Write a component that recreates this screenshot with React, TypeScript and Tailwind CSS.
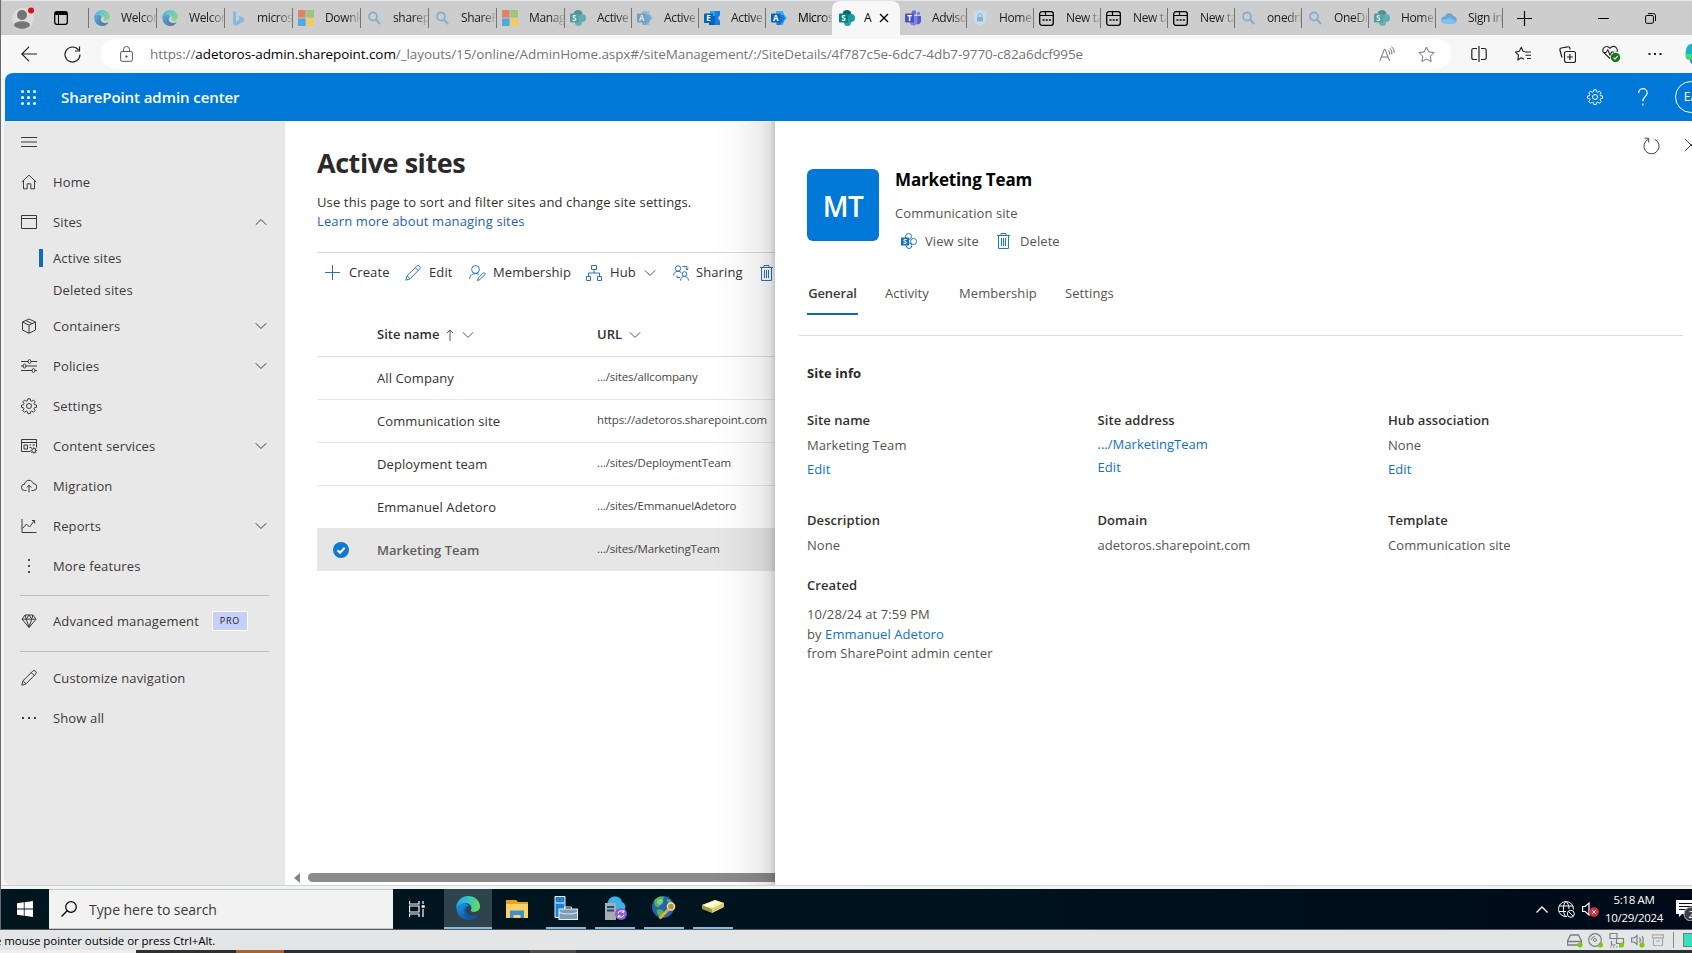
import React, { type ReactNode } from "react";

type IconProps = { children: ReactNode; className?: string; box?: string };

function Icon({ children, className = "h-4 w-4", box = "0 0 16 16" }: IconProps) {
  return (
    <svg viewBox={box} fill="none" stroke="currentColor" strokeWidth="1" className={`shrink-0 ${className}`}>
      {children}
    </svg>
  );
}

/* ---------- shared glyphs ---------- */

const ChevronDown = ({ className = "h-3 w-3" }: { className?: string }) => (
  <Icon className={className} box="0 0 12 12">
    <path d="M.8 3.3 6 8.5l5.2-5.2" />
  </Icon>
);
const ChevronUp = ({ className = "h-3 w-3" }: { className?: string }) => (
  <Icon className={className} box="0 0 12 12">
    <path d="M.8 8.7 6 3.5l5.2 5.2" />
  </Icon>
);
const Pencil = () => (
  <Icon>
    <path d="M.8 15.2 2 10.8 11.6 1.3a1.9 1.9 0 0 1 2.9 0 1.9 1.9 0 0 1 0 2.9L5 13.9.8 15.2Z M10.3 2.6l2.9 2.9 M2.1 10.8 5 13.7" />
  </Icon>
);
const Trash = ({ className = "h-4 w-[13px]" }: { className?: string }) => (
  <Icon className={className} box="0 0 13 16">
    <path d="M0 2.5h13M4 2.5v-2h5v2M1.5 2.5v13h10v-13M4.5 5v8M6.5 5v8M8.5 5v8" />
  </Icon>
);
const gearPath =
  "M6.8.8h2.4l.4 2 1.2.5 1.7-1.2 1.7 1.7L13 5.500l.5 1.200 2 .300v2.300l-2 .400-.5 1.200 1.200 1.700-1.700 1.700-1.700-1.200-1.200.500-.4 2H6.800l-.4-2-1.200-.5-1.700 1.200-1.700-1.700L3 10.900l-.5-1.200-2-.4V7l2-.3.500-1.200L1.800 3.800l1.700-1.700 1.700 1.200 1.200-.5Z";
const Gear = ({ className = "h-4 w-4" }: { className?: string }) => (
  <Icon className={className}>
    <path d={gearPath} />
    <circle cx="8" cy="8" r="2.5" />
  </Icon>
);

/* ---------- tab favicons ---------- */

function EdgeLogo({ className = "h-4 w-4", id }: { className?: string; id: string }) {
  return (
    <svg viewBox="0 0 24 24" className={`shrink-0 ${className}`}>
      <defs>
        <linearGradient id={`${id}a`} x1="0" y1=".3" x2="1" y2=".4">
          <stop offset="0" stopColor="#2aa7e8" />
          <stop offset=".55" stopColor="#34c6c3" />
          <stop offset="1" stopColor="#66e04f" />
        </linearGradient>
        <linearGradient id={`${id}b`} x1="0" y1="0" x2=".5" y2="1">
          <stop offset="0" stopColor="#1b9ce6" />
          <stop offset="1" stopColor="#0c59a4" />
        </linearGradient>
      </defs>
      <path fill={`url(#${id}b)`} d="M.2 10C.8 16 2 20.500 8 23.300c5 1.700 11.500.5 14-4.800-4 2-10 2-12-2.300-1.200-3 .5-6 3-6.700C9 5.500 2 6 .2 10Z" />
      <path fill={`url(#${id}a)`} d="M.2 11C1 4.500 6 0 12 0c7 0 12 5 12 10.200 0 3.600-3 5.700-6 5.700-2.500 0-4-.8-3-2.200 1.500-2.500-.5-6.700-5.500-6.700C5 7 1 8.700.2 11Z" />
      <path fill="#0b4f9a" d="M9.500 10.500C7 13 7 18 10.500 21.500c4 2.500 8.700.5 11.500-3-4 2-9.600 1.300-11.500-2.500-.8-2-.6-3.800.5-5.500Z" opacity=".55" />
    </svg>
  );
}

function MicrosoftLogo() {
  return (
    <svg viewBox="0 0 16 16" className="h-4 w-4 shrink-0">
      <path fill="#e0826a" d="M0 0h7.600v7.600H0z" />
      <path fill="#9ec57a" d="M8.400 0H16v7.600H8.400z" />
      <path fill="#4fa9e0" d="M0 8.400h7.600V16H0z" />
      <path fill="#f4ca60" d="M8.400 8.400H16V16H8.400z" />
    </svg>
  );
}

function BingLogo() {
  return (
    <svg viewBox="0 0 16 16" className="h-4 w-4 shrink-0">
      <path fill="#86b9e8" d="m3 1 3 1v9.500L9.500 9 8 5.500l6 2.500v3.200L6 16l-3-2z" />
    </svg>
  );
}

function SearchFavicon() {
  return (
    <Icon className="h-4 w-4 text-[#86aed1]">
      <circle cx="7" cy="6.500" r="4" strokeWidth="1.800" />
      <path d="m10 9.500 4 4.500" strokeWidth="2.200" />
    </Icon>
  );
}

function SharePointLogo({ faded }: { faded?: boolean }) {
  return (
    <svg viewBox="0 0 16 16" className={faded ? "h-4 w-4 shrink-0 opacity-60" : "h-4 w-4 shrink-0"}>
      <circle cx="8" cy="4.500" r="4.500" fill="#05696b" />
      <circle cx="12" cy="8" r="4" fill="#1a9ba1" />
      <circle cx="8.500" cy="12.500" r="3.500" fill="#2a9fa6" />
      <rect y="3.500" width="9" height="9" rx=".8" fill="#038387" />
      <text x="4.500" y="11" textAnchor="middle" fontSize="8" fontWeight="700" fill="#fff" className="font-['Open_Sans']">S</text>
    </svg>
  );
}

function AdminLogo({ faded }: { faded?: boolean }) {
  return (
    <svg viewBox="0 0 16 16" className={faded ? "h-4 w-4 shrink-0 opacity-45" : "h-4 w-4 shrink-0"}>
      <path fill="#35b2ef" d="M5 1h7l1 3.500 3 3.500-3 3.500L12 15H5z" />
      <path fill="#1a78d2" d="M7 5h5.500L14 8l-2 4-3 3H6z" />
      <rect y="3.500" width="9.500" height="9" rx=".8" fill="#0b66b8" />
      <text x="4.700" y="11" textAnchor="middle" fontSize="8" fontWeight="700" fill="#fff" className="font-['Open_Sans']">A</text>
    </svg>
  );
}

function ExchangeLogo() {
  return (
    <svg viewBox="0 0 16 16" className="h-4 w-4 shrink-0">
      <path fill="#28a8ea" d="M6 1h5v14H6z" />
      <path fill="#1480dc" d="M11 1h5v4l-2 3 2 3v4h-5z" />
      <path fill="#0364b8" d="M5 6h6v9H5z" />
      <rect y="3.500" width="9" height="9.500" rx=".8" fill="#0a62ba" />
      <text x="4.500" y="11.200" textAnchor="middle" fontSize="8" fontWeight="700" fill="#fff" className="font-['Open_Sans']">E</text>
    </svg>
  );
}

function TeamsLogo() {
  return (
    <svg viewBox="0 0 16 16" className="h-4 w-4 shrink-0">
      <circle cx="13.500" cy="3.500" r="1.700" fill="#7b83eb" />
      <circle cx="9" cy="2.600" r="2.300" fill="#6870dc" />
      <path fill="#5059c9" d="M9 6h7v5a3.500 3.500 0 0 1-5 3z" />
      <path fill="#7b83eb" d="M5 6h7.500v5.500a4 4 0 0 1-7.500 2z" />
      <rect y="3.500" width="9" height="9" rx=".8" fill="#4b53bc" />
      <text x="4.500" y="11" textAnchor="middle" fontSize="8" fontWeight="700" fill="#fff" className="font-['Open_Sans']">T</text>
    </svg>
  );
}

function ShieldLogo() {
  return (
    <svg viewBox="0 0 16 16" className="h-4 w-4 shrink-0">
      <path fill="#c4dcec" d="M8 0 14.500 2v6c0 4-3 6.500-6.500 8C4.500 14.500 1.500 12 1.500 8V2z" />
      <rect x="5" y="7" width="6" height="4.500" rx=".6" fill="#8ab5d2" />
      <path d="M6.200 7V5.500a1.800 1.800 0 0 1 3.600 0V7" fill="none" stroke="#8ab5d2" />
    </svg>
  );
}

function NewTabIcon() {
  return (
    <Icon className="h-[15px] w-[15px] text-black" box="0 0 15 15">
      <rect x=".7" y=".7" width="13.600" height="13.600" rx="2.200" strokeWidth="1.300" />
      <path d="M1 4.500h5.500V1M6.500 4.500H14" strokeWidth="1.200" />
      <path d="M3.500 9h2M6.700 9h2M9.900 9h2" strokeWidth="1.700" />
    </Icon>
  );
}

function CloudLogo() {
  return (
    <svg viewBox="0 0 16 16" className="h-4 w-4 shrink-0">
      <path fill="#6aa5d6" d="M4 6.500A4.500 4.500 0 0 1 12.500 6 3.800 3.800 0 0 1 12.500 13.500H3.500A3.500 3.500 0 0 1 4 6.500Z" />
      <path fill="#7fc0ee" d="m0 10 9-2 6.500 3.500c-.6 1.300-1.600 2-3 2h-9C1.500 13.500 0 12 0 10Z" />
    </svg>
  );
}

type Tab = { icon: ReactNode; label: string };

const leftTabs: Tab[] = [
  { icon: <span className="opacity-65"><EdgeLogo id="t1" /></span>, label: "Welcome" },
  { icon: <span className="opacity-65"><EdgeLogo id="t2" /></span>, label: "Welcome" },
  { icon: <BingLogo />, label: "microsoft" },
  { icon: <MicrosoftLogo />, label: "Download" },
  { icon: <SearchFavicon />, label: "sharepoint" },
  { icon: <SearchFavicon />, label: "SharePoint" },
  { icon: <MicrosoftLogo />, label: "Manage" },
];
const midTabs: Tab[] = [
  { icon: <SharePointLogo faded />, label: "Active" },
  { icon: <AdminLogo faded />, label: "Active" },
  { icon: <ExchangeLogo />, label: "Active" },
  { icon: <AdminLogo />, label: "Microsoft" },
];
const rightTabs: Tab[] = [
  { icon: <TeamsLogo />, label: "Advisor" },
  { icon: <ShieldLogo />, label: "Home" },
  { icon: <NewTabIcon />, label: "New tab" },
  { icon: <NewTabIcon />, label: "New tab" },
  { icon: <NewTabIcon />, label: "New tab" },
  { icon: <SearchFavicon />, label: "onedrive" },
  { icon: <SearchFavicon />, label: "OneDrive" },
  { icon: <SharePointLogo faded />, label: "Home" },
  { icon: <CloudLogo />, label: "Sign in" },
];

function TabItem({ tab, width }: { tab: Tab; width: string }) {
  return (
    <div className={`flex h-full shrink-0 items-center ${width}`}>
      <div className="ml-[5px] flex w-[27px] shrink-0 items-center">{tab.icon}</div>
      <div className="min-w-0 flex-1 overflow-hidden whitespace-nowrap text-[12px] tracking-[-0.35px] text-[#1c1c1c] [mask-image:linear-gradient(to_right,black_60%,transparent_105%)]">
        {tab.label}
      </div>
      <div className="h-5 w-px bg-[#747474]" />
    </div>
  );
}

function TabStrip() {
  return (
    <div className="flex h-[34px] items-center bg-[#cdcdcd]">
      <div className="ml-[10px] h-[22px] w-6 shrink-0 overflow-hidden">
        <svg viewBox="0 0 24 22" className="h-[22px] w-6">
          <circle cx="12" cy="12" r="11" fill="#dcdcdc" />
          <circle cx="11" cy="8" r="5" fill="#757575" />
          <path d="M3 18c1-5 15-5 16 0-2 5-14 5-16 0Z" fill="#757575" />
          <circle cx="20" cy="3.500" r="3" fill="#d4121c" />
        </svg>
      </div>
      <Icon className="ml-[19px] h-[14px] w-[14px] text-black" box="0 0 14 14">
        <rect x=".7" y=".7" width="12.600" height="12.600" rx="2" strokeWidth="1.300" />
        <path d="M1 2.500h12" strokeWidth="3" />
        <path d="M4.500 3v10" />
      </Icon>
      <div className="ml-5 h-5 w-px shrink-0 bg-[#747474]" />
      {leftTabs.map((t, i) => (
        <TabItem key={i} tab={t} width="w-[68px]" />
      ))}
      {midTabs.slice(0, 3).map((t, i) => (
        <TabItem key={i} tab={t} width="w-[67px]" />
      ))}
      <div className="flex h-full w-[66px] shrink-0 items-center">
        <div className="ml-[5px] flex w-[27px] shrink-0">{midTabs[3].icon}</div>
        <div className="min-w-0 flex-1 overflow-hidden whitespace-nowrap text-[12px] tracking-[-0.35px] [mask-image:linear-gradient(to_right,black_70%,transparent_105%)]">
          Microsoft
        </div>
      </div>
      <div className="flex h-full w-[68px] shrink-0 items-center rounded-t-lg bg-[#f7f7f7]">
        <div className="ml-[7px] flex w-[25px] shrink-0">
          <SharePointLogo />
        </div>
        <div className="w-[9px] overflow-hidden text-[12px]">A</div>
        <Icon className="ml-[6px] h-[10px] w-[10px] text-black" box="0 0 10 10">
          <path d="m1 1 8 8M9 1 1 9" strokeWidth="1.300" />
        </Icon>
      </div>
      {rightTabs.map((t, i) => (
        <TabItem key={i} tab={t} width="w-[67px]" />
      ))}
      <Icon className="ml-[14px] h-[15px] w-[15px] text-black" box="0 0 15 15">
        <path d="M7.500 0v15M0 7.500h15" strokeWidth="1.200" />
      </Icon>
      <div className="ml-[66px] h-px w-[11px] shrink-0 bg-black" />
      <Icon className="ml-[36px] h-[11px] w-[11px] text-black" box="0 0 11 11">
        <rect x=".6" y="2.500" width="7.800" height="7.800" rx="1.200" />
        <path d="M3 .6h5.500a2 2 0 0 1 2 2V8" />
      </Icon>
      <Icon className="ml-[36px] h-[11px] w-[11px] text-black" box="0 0 11 11">
        <path d="m.5.5 10 10M10.500.5.5 10.500" />
      </Icon>
    </div>
  );
}

function AddressBar() {
  return (
    <div className="flex h-[38px] items-center bg-[#f7f7f7] text-[#202020]">
      <Icon className="ml-5 h-4 w-4">
        <path d="M8 .8.800 8 8 15.200M.8 8H16" strokeWidth="1.200" />
      </Icon>
      <Icon className="ml-[27px] h-[17px] w-[17px]" box="0 0 17 17">
        <path d="M14.500 4A7.500 7.500 0 1 0 16 8.500M15.500.5V5H11" strokeWidth="1.200" />
      </Icon>
      <div className="ml-5 flex h-[30px] w-[1350px] shrink-0 items-center rounded-full bg-white">
        <Icon className="ml-[19px] h-4 w-[13px] text-[#5a5a5a]" box="0 0 13 16">
          <rect x=".6" y="5.500" width="11.800" height="9.800" rx="1.500" />
          <path d="M3.500 5.500V3.500a3 3 0 0 1 6 0v2" />
          <circle cx="6.500" cy="10.500" r=".8" fill="currentColor" />
        </Icon>
        <div className="ml-[17px] w-[1229px] shrink-0 whitespace-nowrap text-[13.5px] tracking-[-0.088px] text-[#757575]">
          https://<span className="text-black">adetoros-admin.sharepoint.com</span>
          /_layouts/15/online/AdminHome.aspx#/siteManagement/:/SiteDetails/4f787c5e-6dc7-4db7-9770-c82a6dcf995e
        </div>
        <Icon className="h-4 w-4 text-[#757575]">
          <path d="M.8 15 5.500 3h.4l4.700 12M2.500 11h6.500M9.500 4.500a4 4 0 0 1 1 4M11 2.300a6.500 6.500 0 0 1 1.800 6M12.500.500A8.500 8.500 0 0 1 15.300 7" />
        </Icon>
        <Icon className="ml-[23px] h-[17px] w-[17px] text-[#757575]" box="0 0 17 17">
          <path strokeLinejoin="round" d="m8.500 1 2.300 4.900 5.300.7-3.900 3.700 1 5.300-4.700-2.600-4.700 2.600 1-5.300L.9 6.600l5.300-.7z" />
        </Icon>
      </div>
      <Icon className="ml-5 h-4 w-4">
        <path strokeWidth="1.200" d="M8 0v16M6 2.500H2.500A1.700 1.700 0 0 0 .8 4.200v7.600a1.700 1.700 0 0 0 1.700 1.700H6M10 2.500h3.500a1.700 1.700 0 0 1 1.700 1.700v7.600a1.700 1.700 0 0 1-1.700 1.700H10" />
      </Icon>
      <Icon className="ml-[28px] h-4 w-4">
        <path strokeLinejoin="round" strokeWidth="1.100" d="M10 5.500 8 5.200 6.300 1.200 4.300 5.300.5 6l3 3.100-.7 4.900 3.500-2.200 2.700 1.400M10 6h6M10.500 9.200H16M12 12.500h4" />
      </Icon>
      <Icon className="ml-[28px] h-[17px] w-[17px]" box="0 0 17 17">
        <path strokeWidth="1.200" d="M3 11.500 1 4.500A2 2 0 0 1 2.200 2L8.500.8a2 2 0 0 1 2.400 1.500l.3 1.200M10.900 8v6M7.900 11h6" />
        <rect x="5.500" y="5.500" width="11" height="11" rx="2" strokeWidth="1.200" />
      </Icon>
      <Icon className="ml-[26px] h-[18px] w-[19px]" box="0 0 19 18">
        <path d="M8 13.500 1.600 7.500C-.8 4.500 3 .2 6.600 2L8 3.300 9.300 2c3.500-2 7 1.500 5.600 4.800M1 7.500h3l1.800-2.700L8 10l1.700-3h2.500" strokeWidth="1.100" />
        <circle cx="13.500" cy="12.500" r="4.700" fill="#13771b" stroke="none" />
        <path d="m11.500 12.600 1.500 1.500 2.600-3" stroke="#fff" strokeWidth="1.200" />
      </Icon>
      <Icon className="ml-[27px] h-[4px] w-[14px]" box="0 0 14 4">
        <path d="M.5 2h2M6 2h2M11.500 2h2" strokeWidth="2.200" />
      </Icon>
      <svg viewBox="0 0 22 22" className="ml-[22px] h-[22px] w-[22px] shrink-0">
        <path d="M7 1h7l-4 15H4C0 16 1 1 7 1Z" fill="#12b5c9" />
        <path d="M2 11h9l-2 6H5c-3 0-4-3-3-6Z" fill="#48d67d" />
        <path d="M6 17h6l-1 4H9c-2 0-3-2-3-4Z" fill="#2b7be0" />
      </svg>
    </div>
  );
}

function AppHeader() {
  return (
    <div className="ml-1 flex h-12 items-center rounded-tl-lg bg-[#0078d7] text-white">
      <div className="ml-4 grid grid-cols-3 gap-[3px]">
        {Array.from({ length: 9 }, (_, i) => (
          <span key={i} className="h-[3px] w-[3px] rounded-full bg-white" />
        ))}
      </div>
      <div className="ml-[25px] flex-1 text-[15px] font-semibold tracking-[-0.07px]">SharePoint admin center</div>
      <Gear className="h-4 w-4" />
      <Icon className="ml-[35px] h-[18px] w-[10px]" box="0 0 10 18">
        <path d="M.7 5a4.200 4.200 0 0 1 8.500-.2c0 4-4.400 4-4.400 8.500M4.800 15.500v2" strokeWidth="1.200" />
      </Icon>
      <div className="-mr-[15px] ml-[27px] flex h-[32px] w-[32px] shrink-0 items-center justify-center rounded-full border border-white text-[12px]">
        EA
      </div>
    </div>
  );
}

/* ---------- navigation ---------- */

const nav: Record<string, ReactNode> = {
  home: <path d="M.8 8 8 1.200 15.200 8M2.500 6.500v8.300h3.700v-5h3.600v5h3.700V6.500" />,
  sites: <path d="M.5 1.500h15v13H.5zM.5 4.500h15" />,
  containers: <path d="M8 1 14.500 4v8L8 15.300 1.500 12V4zM1.500 4 8 7.200 14.500 4M8 7.200v8M4.700 2.500 11.200 5.700" />,
  policies: (
    <>
      <path d="M0 3.500h7M10 3.500h6M0 8h2M5 8h11M0 12.500h11M14 12.500h2" strokeWidth="1.200" />
      <ellipse cx="8.500" cy="3.500" rx="1.400" ry="2" />
      <ellipse cx="3.500" cy="8" rx="1.400" ry="2" />
      <ellipse cx="12.500" cy="12.500" rx="1.400" ry="2" />
    </>
  ),
  content: (
    <>
      <path d="M9.500 13.500H.5v-12h15v8M.5 4.500h15M3 7h3.500v4H3zM8.500 7H10M11.500 7H14M8.500 9.500h2" />
      <circle cx="12.800" cy="12.500" r="2" />
      <path d="M12.800 9.300v1M12.800 14.700v1M9.600 12.500h1M15 12.500h1M10.500 10.200l.8.800M14.300 14l.8.800M15.100 10.200l-.8.800M11.300 14l-.8.800" />
    </>
  ),
  migration: <path d="M5.500 12.500H3.500a3.100 3.100 0 0 1 0-6.200C4 3.500 6 2.300 8 2.300S11.800 3.500 12.300 5.500a3.500 3.500 0 0 1 0 7H10.500M8 14.500V7.200M5.700 9.500 8 7.200l2.300 2.300" />,
  reports: <path d="M1 1v13.500h14.500M1.500 10.500l4-4.500 3 3 5-6.500M11 2.500h2.700v3" />,
  more: <path d="M8 1v2M8 7v2M8 13v2" strokeWidth="1.800" />,
  advanced: <path d="M4 2h8l3 4.200L8 14.500 1 6.200zM1 6.200h14M5.300 6.200 8 14.300l2.700-8.100L8 2 5.300 6.200 4 2M12 2l-1.300 4.200" />,
  all: <path d="M1 8h2M7 8h2M13 8h2" strokeWidth="1.800" />,
};

function NavRow({ icon, label, chevron, badge }: { icon: ReactNode; label: string; chevron?: "up" | "down"; badge?: string }) {
  return (
    <div className="flex h-10 items-center pl-[17px] pr-[18px]">
      <div className="flex w-8 shrink-0 pb-px">{icon}</div>
      <div className="whitespace-nowrap pt-px">{label}</div>
      {badge && (
        <div className="ml-[13px] flex h-5 w-9 items-center justify-center border border-white bg-[#c7d0f8] text-[9px] tracking-[0.8px] text-[#222]">
          {badge}
        </div>
      )}
      <div className="flex-1" />
      {chevron === "up" && <ChevronUp />}
      {chevron === "down" && <ChevronDown />}
    </div>
  );
}

function Sidebar() {
  return (
    <nav className="ml-[3px] flex w-[281px] shrink-0 flex-col rounded-bl-lg bg-[#e8e8e8] text-[13px] tracking-[0.13px] text-[#3b3a39]">
      <div className="flex h-[41px] items-center pl-[17px]">
        <Icon>
          <path d="M0 3.500h16M0 8h16M0 12.500h16" strokeWidth="1.100" />
        </Icon>
      </div>
      <NavRow icon={<Icon>{nav.home}</Icon>} label="Home" />
      <NavRow icon={<Icon>{nav.sites}</Icon>} label="Sites" chevron="up" />
      <div className="flex h-8 items-center pl-[35px]">
        <span className="h-[18px] w-1 bg-[#0f6cbd]" />
        <span className="ml-[10px] pt-px">Active sites</span>
      </div>
      <div className="flex h-8 items-center pl-[49px] pt-px">Deleted sites</div>
      <NavRow icon={<Icon>{nav.containers}</Icon>} label="Containers" chevron="down" />
      <NavRow icon={<Icon>{nav.policies}</Icon>} label="Policies" chevron="down" />
      <NavRow icon={<Gear />} label="Settings" />
      <NavRow icon={<Icon>{nav.content}</Icon>} label="Content services" chevron="down" />
      <NavRow icon={<Icon>{nav.migration}</Icon>} label="Migration" />
      <NavRow icon={<Icon>{nav.reports}</Icon>} label="Reports" chevron="down" />
      <NavRow icon={<Icon>{nav.more}</Icon>} label="More features" />
      <div className="mx-4 mb-[5px] mt-[9px] h-px bg-[#bdbdbd]" />
      <NavRow icon={<Icon>{nav.advanced}</Icon>} label="Advanced management" badge="PRO" />
      <div className="mx-4 mb-[6px] mt-[10px] h-px bg-[#bdbdbd]" />
      <NavRow icon={<Pencil />} label="Customize navigation" />
      <NavRow icon={<Icon>{nav.all}</Icon>} label="Show all" />
    </nav>
  );
}

/* ---------- site list ---------- */

const sites = [
  { name: "All Company", url: ".../sites/allcompany" },
  { name: "Communication site", url: "https://adetoros.sharepoint.com" },
  { name: "Deployment team", url: ".../sites/DeploymentTeam" },
  { name: "Emmanuel Adetoro", url: ".../sites/EmmanuelAdetoro" },
  { name: "Marketing Team", url: ".../sites/MarketingTeam", selected: true },
];

function SiteList() {
  return (
    <section className="relative flex w-[490px] shrink-0 flex-col overflow-hidden bg-white pl-8 text-[13px] tracking-[0.1px] text-[#323130]">
      <h1 className="mt-[22px] h-10 text-[27px] font-bold leading-[40px] tracking-[-0.45px] text-[#2b2a29]">Active sites</h1>
      <div className="mt-[10px] whitespace-nowrap leading-[19px] tracking-[0.13px]">
        Use this page to sort and filter sites and change site settings.
        <div className="text-[#1f62b0]">Learn more about managing sites</div>
      </div>
      <div className="mt-[21px] flex h-10 shrink-0 items-center whitespace-nowrap border-t border-[#d8d8d8] [&_svg]:text-[#2b73b9] [&>span]:pt-px">
        <Icon className="ml-2 h-[15px] w-[15px]" box="0 0 15 15">
          <path d="M7.500 0v15M0 7.500h15" />
        </Icon>
        <span className="ml-[9px] w-[56px]">Create</span>
        <Pencil />
        <span className="ml-2 w-[40px]">Edit</span>
        <Icon className="h-4 w-[17px]" box="0 0 17 16">
          <circle cx="6.500" cy="4.500" r="3.900" />
          <path d="M.6 14c0-3.500 2.700-5.500 5.900-5.500 1.500 0 2.700.5 3.500 1M8.500 15.500l.7-2.500 5-5c1-.8 2.500.7 1.600 1.700l-5 5z" />
        </Icon>
        <span className="ml-[7px] w-[93px]">Membership</span>
        <Icon className="h-4 w-4">
          <path d="M5.500.5h5v4h-5zM.5 11.500h4v4h-4zM11.500 11.500h4v4h-4zM8 4.500V8M2.500 11.500V8h11v3.500" />
        </Icon>
        <span className="ml-2 w-[34px]">Hub</span>
        <span className="flex w-[29px] [&_svg]:!text-[#555]">
          <ChevronDown />
        </span>
        <Icon className="h-4 w-4">
          <circle cx="5" cy="3.500" r="2.700" />
          <circle cx="11.500" cy="9" r="2.300" />
          <path d="M.5 10.500C.5 8 2.500 6.300 5 6.300c1.300 0 2.500.5 3.300 1.300M7.500 15.500c0-2.500 1.800-4 4-4s4 1.500 4 4M9.500 1.500h4.500V5M12.500 3.500 14 5l1.500-1.500M7 12.500H4v-2" />
        </Icon>
        <span className="ml-[7px] w-[64px]">Sharing</span>
        <Trash />
      </div>
      <div className="mt-[21px] flex h-[44px] shrink-0 items-center border-b border-[#e1dfdd] font-semibold tracking-[0]">
        <div className="ml-[60px] flex w-[220px] items-center">
          Site name
          <Icon className="ml-[7px] h-3 w-2 text-[#555]" box="0 0 8 12">
            <path d="M4 12V1M1 4l3-3 3 3" />
          </Icon>
          <ChevronDown className="ml-[8px] h-3 w-3 text-[#555]" />
        </div>
        URL
        <ChevronDown className="ml-[7px] h-3 w-3 text-[#555]" />
      </div>
      {sites.map((s) => (
        <div
          key={s.name}
          className={
            s.selected
              ? "-mt-px flex h-[43px] shrink-0 items-center bg-[#e6e6e6] pt-px"
              : "flex h-[43px] shrink-0 items-center border-b border-[#e8e7e6] pt-px"
          }
        >
          <div className="flex w-[60px] shrink-0 pl-4">
            {s.selected && (
              <svg viewBox="0 0 16 16" className="h-4 w-4">
                <circle cx="8" cy="8" r="8" fill="#0f78d0" />
                <path d="m4.500 8.200 2.500 2.500 4.700-4.900" fill="none" stroke="#fff" strokeWidth="2" />
              </svg>
            )}
          </div>
          <div className={s.selected ? "w-[220px] shrink-0 pt-px font-semibold tracking-[0] text-[#605e5c]" : "w-[220px] shrink-0 pt-px"}>
            {s.name}
          </div>
          <div className="whitespace-nowrap pb-[3px] text-[11.5px] tracking-[-0.14px] text-[#484644]">{s.url}</div>
        </div>
      ))}
      <div className="flex-1" />
      <div className="-ml-8 mb-[3px] flex h-[9px] shrink-0 items-center pl-[9px]">
        <svg viewBox="0 0 6 10" className="h-[10px] w-[6px]">
          <path d="M6 0v10L0 5z" fill="#858585" />
        </svg>
        <div className="ml-[8px] h-[9px] flex-1 rounded-l-full bg-[#8b8b8b]" />
      </div>
      <div className="pointer-events-none absolute inset-y-0 right-0 w-[65px] bg-[linear-gradient(to_right,transparent,rgba(0,0,0,0.02)_40%,rgba(0,0,0,0.07)_78%,rgba(0,0,0,0.12)_92%,rgba(0,0,0,0.22))]" />
    </section>
  );
}

/* ---------- details panel ---------- */

function Field({ label, children }: { label: string; children: ReactNode }) {
  return (
    <div className="w-[290.5px] shrink-0">
      <div className="h-5 font-semibold leading-5 text-[#323130]">{label}</div>
      {children}
    </div>
  );
}

const link = "text-[#1070c4]";

function DetailsPanel() {
  return (
    <aside className="flex flex-1 flex-col overflow-hidden bg-white text-[13px] tracking-[0.08px] text-[#555351]">
      <div className="mt-4 flex h-4 shrink-0 justify-end">
        <Icon className="h-[18px] w-[17px] text-[#444]" box="0 0 17 18">
          <path d="M5.500 2.200A7.600 7.600 0 1 0 11.500 2.200M1.500 1.200H5.700V5.500" />
        </Icon>
        <Icon className="-mr-[7px] ml-[24px] h-[15px] w-[15px] text-[#444]" box="0 0 15 15">
          <path d="m1 2 12 12M13 2 1 14" />
        </Icon>
      </div>
      <div className="ml-8 mt-4 flex h-[86px] shrink-0">
        <div className="flex h-[72px] w-[72px] items-center justify-center rounded-md bg-[#0078d7] pt-px text-[28px] font-semibold tracking-[-0.5px] text-white">
          MT
        </div>
        <div className="ml-4">
          <div className="h-[23px] text-[17px] font-bold leading-[22px] tracking-[-0.15px] text-black">Marketing Team</div>
          <div className="mt-[11px] h-5 leading-5">Communication site</div>
          <div className="mt-[8px] flex h-5 items-center pl-[6px] leading-5">
            <Icon className="h-4 w-4 text-[#2078c4]">
              <circle cx="7.500" cy="3.500" r="3" />
              <circle cx="12.500" cy="8.500" r="3" />
              <circle cx="8" cy="12.700" r="2.800" />
              <rect y="4.500" width="8" height="8" fill="#1570bd" stroke="none" />
              <text x="4" y="11" textAnchor="middle" fontSize="7" fontWeight="700" fill="#fff" stroke="none">S</text>
            </Icon>
            <span className="ml-2 w-[72px]">View site</span>
            <span className="flex text-[#2078c4]">
              <Trash />
            </span>
            <span className="ml-[10px]">Delete</span>
          </div>
        </div>
      </div>
      <div className="ml-8 mt-[24px] flex h-[56px] shrink-0 items-start">
        <div className="flex h-[36px] w-[51px] justify-center border-b-2 border-[#1567ab] pt-[4px] font-semibold leading-5 tracking-[-0.1px] text-[#3b3a39]">
          General
        </div>
        <div className="ml-[27px] w-[74px] pt-[4px] leading-5">Activity</div>
        <div className="w-[106px] pt-[4px] leading-5">Membership</div>
        <div className="pt-[4px] leading-5">Settings</div>
      </div>
      <div className="ml-6 mr-[9px] h-px shrink-0 bg-[#dcdcdc]" />
      <div className="ml-8 mt-[27px] h-5 shrink-0 font-bold leading-5 text-[#2b2a29]">Site info</div>
      <div className="ml-8 mt-[27px] flex h-[100px] shrink-0">
        <Field label="Site name">
          <div className="mt-[5px] leading-5">Marketing Team</div>
          <div className={`mt-[4px] leading-5 ${link}`}>Edit</div>
        </Field>
        <Field label="Site address">
          <div className={`mt-[4px] leading-5 tracking-[0.02px] ${link}`}>.../MarketingTeam</div>
          <div className={`mt-[3px] leading-5 ${link}`}>Edit</div>
        </Field>
        <Field label="Hub association">
          <div className="mt-[5px] leading-5">None</div>
          <div className={`mt-[4px] leading-5 ${link}`}>Edit</div>
        </Field>
      </div>
      <div className="ml-8 flex h-[65px] shrink-0">
        <Field label="Description">
          <div className="mt-[5px] leading-5">None</div>
        </Field>
        <Field label="Domain">
          <div className="mt-[5px] leading-5 tracking-[0]">adetoros.sharepoint.com</div>
        </Field>
        <Field label="Template">
          <div className="mt-[5px] leading-5">Communication site</div>
        </Field>
      </div>
      <div className="ml-8">
        <Field label="Created">
          <div className="mt-[10px] leading-[19.6px]">
            10/28/24 at 7:59 PM
            <br />
            by <span className={link}>Emmanuel Adetoro</span>
            <br />
            from SharePoint admin center
          </div>
        </Field>
      </div>
    </aside>
  );
}

/* ---------- taskbar ---------- */

function TaskTile({ children, active }: { children: ReactNode; active?: boolean }) {
  return (
    <div className={active ? "flex h-full w-[48px] flex-col items-center bg-[#2f434d]" : "flex h-full w-[40px] flex-col items-center"}>
      <div className="flex flex-1 items-center">{children}</div>
      <div className="h-[2px] w-full bg-[#8ab9dd]" />
    </div>
  );
}

function Taskbar() {
  return (
    <div className="flex h-10 items-center bg-[linear-gradient(to_right,#00161f,#00141f_50%,#000a18)] text-white">
      <div className="flex w-12 shrink-0 justify-center">
        <svg viewBox="0 0 16 16" className="h-4 w-4 fill-white">
          <path d="M0 2.300 6.800 1.300v6.300H0zM7.600 1.200 16 0v7.600H7.600zM0 8.400h6.800v6.300L0 13.700zM7.600 8.400H16V16l-8.400-1.200z" />
        </svg>
      </div>
      <div className="flex h-10 w-[344px] shrink-0 items-center border-y border-[#c5c5c5] bg-[#f2f2f2] text-[#3a3a3a]">
        <Icon className="ml-3 h-4 w-4 text-black">
          <circle cx="10" cy="6" r="5.300" strokeWidth="1.200" />
          <path d="M6.200 9.800.5 15.500" strokeWidth="1.300" />
        </Icon>
        <span className="ml-3 text-[14px] tracking-[-0.05px]">Type here to search</span>
      </div>
      <Icon className="ml-4 h-4 w-4">
        <path d="M.5 0v3h9.500V0M.5 16v-3h9.500v3M.5 5v6h9.500V5zM14 0v3M14 8v8" strokeWidth="1.200" />
        <path d="M12.700 5.500h3" strokeWidth="2.500" />
      </Icon>
      <div className="ml-[19px] flex h-full">
        <TaskTile active>
          <EdgeLogo id="tb" className="h-6 w-6" />
        </TaskTile>
      </div>
      <svg viewBox="0 0 22 18" className="ml-[14px] h-[18px] w-[22px] shrink-0">
        <path d="M0 0h10l2 2h10v16H0z" fill="#e5a518" />
        <path d="M0 4h22v14H0z" fill="#fad269" />
        <path d="M4 18v-7.500h14V18h-3.500v-3h-7v3z" fill="#3f8fd0" />
      </svg>
      <div className="ml-[18px] flex h-full gap-[9px]">
        <TaskTile>
          <svg viewBox="0 0 24 24" className="h-6 w-6">
            <path d="M1 .5h10v21H1z" fill="#1c7fd0" stroke="#e8f3fb" />
            <path d="M1.500 7h9" stroke="#e8f3fb" />
            <rect x="5" y="13" width="18.500" height="10.500" fill="#7f9db4" stroke="#e8f0f5" />
            <path d="M10.500 13v-2h7v2M5 16.500c6 2 12 2 18.500 0" fill="none" stroke="#e8f0f5" />
          </svg>
        </TaskTile>
        <TaskTile>
          <svg viewBox="0 0 24 24" className="h-6 w-6">
            <path d="M5 15a5.500 5.500 0 0 1 0-9C6-1.500 18-1.500 19 6a5 5 0 0 1 1 9z" fill="#38b5e8" />
            <rect x="2" y="7" width="11" height="17" fill="#a7acb0" />
            <path d="M4 10h7v2H4zM4 13.500h7v2H4z" fill="#1c4a78" />
            <circle cx="18" cy="18" r="6" fill="#8a5bd8" />
            <path d="M15 17.500a3.200 3.200 0 0 1 5.700-1.500M21 18.500a3.200 3.200 0 0 1-5.700 1.500M20.900 14v2.200h-2.200M15.100 22v-2.200h2.200" fill="none" stroke="#fff" />
          </svg>
        </TaskTile>
        <TaskTile>
          <svg viewBox="0 0 24 24" className="h-6 w-6">
            <circle cx="11" cy="11" r="11" fill="#2364ad" />
            <path d="M2 5C5 0 10 0 12 1c-2 3 1 4-2 6s-2 5-5 4-2-4-3-6ZM5 14c3-2 7 0 7 3s-3 5-4 4-4-4-3-7ZM15 3c4 1 6 4 6 7-3 0-6-3-6-7Z" fill="#56b355" />
            <circle cx="8" cy="6" r="3" fill="#fff" opacity=".3" />
            <circle cx="19" cy="10.500" r="3.600" fill="#b6924a" stroke="#f5e2a4" strokeWidth="1.500" />
            <path d="m16.500 13.500-9 9" stroke="#e8a93a" strokeWidth="3" />
          </svg>
        </TaskTile>
        <TaskTile>
          <svg viewBox="0 0 24 16" className="mb-1 h-4 w-6">
            <path d="m1 7 13-5 9 3v4L11 15 1 11z" fill="#a39945" />
            <path d="m1 7 13-5 9 3-12 6z" fill="#f6efaf" />
            <path d="m3 7.500 11-4.500 4 1.500L8 9z" fill="#fffbe0" />
            <path d="M11 11v4l12-6V5z" fill="#d5cb74" />
          </svg>
        </TaskTile>
      </div>
      <div className="flex-1" />
      <Icon className="h-[7px] w-3" box="0 0 12 7">
        <path d="M.5 6.500 6 1l5.500 5.500" strokeWidth="1.300" />
      </Icon>
      <Icon className="ml-[10px] h-[17px] w-[17px]" box="0 0 17 17">
        <path d="M9 15.500a7.500 7.500 0 1 1 6.500-7M8 .5C4.500 3 4.500 13 8 15.500M8 .5c2.200 1.800 3 4.500 3 7.500M1 5h14M.8 10.500H8" />
        <circle cx="12.800" cy="12.800" r="3.500" />
        <path d="m10.500 10.500 4.700 4.700" />
      </Icon>
      <Icon className="ml-[7px] h-4 w-[17px]" box="0 0 17 16">
        <path d="M.6 5.500h2.600L7 2v12l-3.800-3.500H.6z" strokeWidth="1.200" />
        <circle cx="12" cy="11" r="4.800" fill="#d13140" stroke="none" />
        <path d="m10.200 9.200 3.600 3.600M13.800 9.200l-3.600 3.600" />
      </Icon>
      <div className="ml-[5px] w-[60px] shrink-0 text-center text-[11.5px] leading-[18px] tracking-[-0.3px]">
        5:18 AM
        <br />
        10/29/2024
      </div>
      <svg viewBox="0 0 16 24" className="ml-[12px] h-6 w-4 shrink-0">
        <path d="M0 3h16v14H6l-3 3v-3H0z" fill="#fff" />
        <path d="M3 6.500h13M3 9.500h13M3 12.500h8" stroke="#000a18" />
        <circle cx="15" cy="17" r="7" fill="#3c3f45" stroke="#bbb" />
        <text x="12.500" y="21" fontSize="9" fill="#fff">2</text>
      </svg>
    </div>
  );
}

function StatusBar() {
  return (
    <div className="flex h-5 items-center overflow-hidden bg-[#e3e5e7] text-black">
      <div className="-ml-[5px] flex-1 whitespace-nowrap pt-[2px] text-[11.5px] leading-5 tracking-[-0.08px]">
        e mouse pointer outside or press Ctrl+Alt.
      </div>
      <Icon className="mr-[5px] h-4 w-4 text-[#7c8082]">
        <path d="M3.500 3h8l3 6v4H.5V9zM.5 9.500h14" strokeWidth="1.300" />
        <circle cx="13" cy="13" r="2.500" fill="#7bc618" stroke="none" />
      </Icon>
      <Icon className="mr-[5px] h-4 w-4 text-[#7c8082]">
        <circle cx="7" cy="8" r="6.300" strokeWidth="1.200" />
        <circle cx="7" cy="8" r="1.500" />
        <path d="M7 4.500a3.500 3.500 0 0 0-3.500 3.500" />
        <circle cx="12.500" cy="13" r="2.500" fill="#7bc618" stroke="none" />
      </Icon>
      <Icon className="mr-[6px] h-4 w-4 text-[#7c8082]">
        <path d="M1 1.500h7v5H1zM7.500 6.500h7v5h-7zM2.500 9v4h4" strokeWidth="1.200" />
        <path d="M1 15h10" strokeDasharray="1.500 1.500" />
        <circle cx="12.500" cy="13" r="2.500" fill="#7bc618" stroke="none" />
      </Icon>
      <Icon className="mr-[5px] h-4 w-4 text-[#7c8082]">
        <path d="M.6 6h2.500L6 3.500v9L3.100 10H.6zM8.500 5.500c1 1.500 1 3.500 0 5M11 4c1.500 2.500 1.500 5.500 0 8" strokeWidth="1.200" />
        <circle cx="11" cy="13" r="2.500" fill="#7bc618" stroke="none" />
      </Icon>
      <Icon className="h-3 w-3 text-[#a8abad]" box="0 0 12 12">
        <path d="M.5.8h11v3H.5zM1.500 4v7.500h9V4M4 7h4" strokeWidth="1.200" />
      </Icon>
      <div className="ml-[9px] h-4 w-px bg-[#8c8f91]" />
      <div className="ml-[9px] h-[14px] w-[9px] border border-r-0 border-[#687] bg-[#35dfbf]" />
    </div>
  );
}

export default function App() {
  return (
    <div className="flex h-[953px] w-[1692px] flex-col overflow-hidden bg-[#f4f4f4] font-['Open_Sans','Noto_Sans',sans-serif]">
      <div className="flex h-[929px] shrink-0 flex-col border-l border-[#6b6b6b]">
        <div className="h-px shrink-0 bg-[#dfe5e8]" />
        <TabStrip />
        <AddressBar />
        <AppHeader />
        <div className="flex h-[765px] shrink-0 border-b border-[#d2d2d2]">
          <Sidebar />
          <SiteList />
          <DetailsPanel />
        </div>
        <div className="h-[3px] shrink-0 bg-[#f2f5f6]" />
        <Taskbar />
      </div>
      <div className="h-px shrink-0 bg-[#53595c]" />
      <StatusBar />
      <div className="flex h-[3px] shrink-0 bg-[#2c2f2f]">
        <div className="w-[136px] bg-[#f1eeec]" />
        <div className="w-[100px] bg-[#2f2f2f]" />
        <div className="w-[48px] bg-[#a8642c]" />
        <div className="ml-[246px] w-[46px] bg-[#4b4b4b]" />
      </div>
    </div>
  );
}
